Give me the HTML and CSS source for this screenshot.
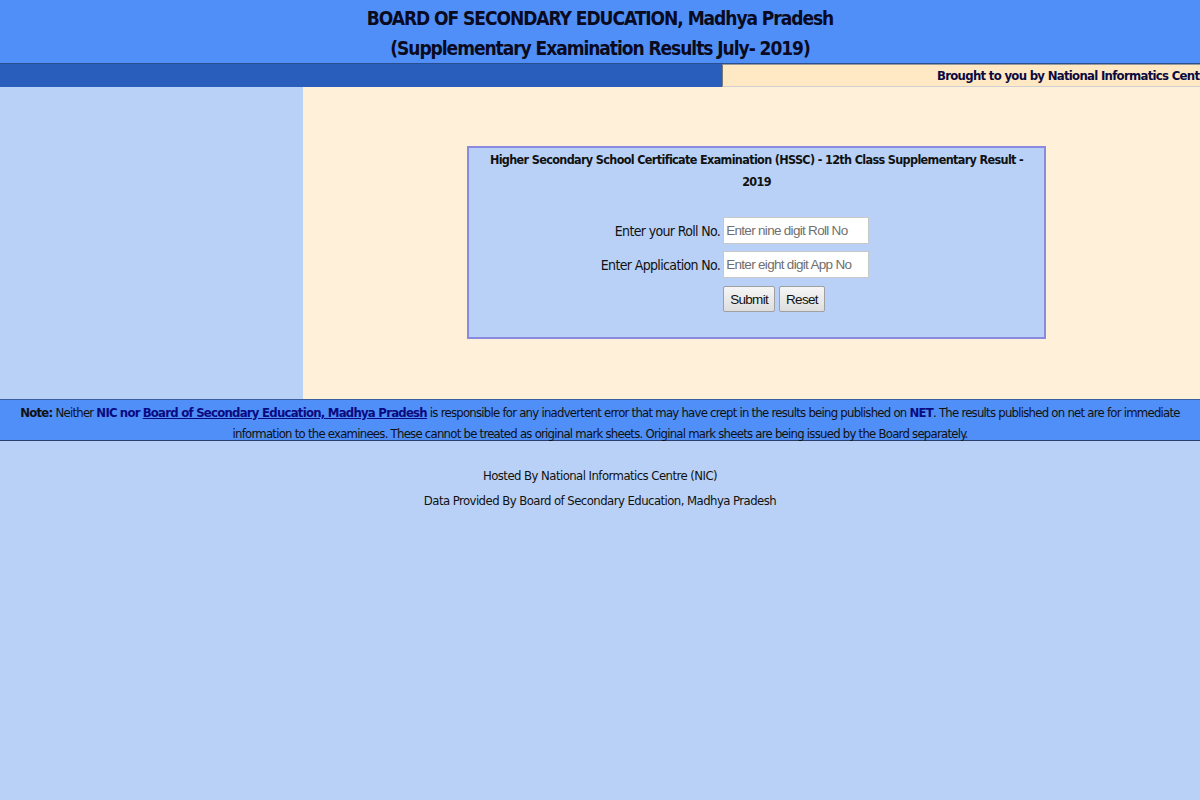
FILE: index.html
```html
<!DOCTYPE html>
<html>
<head>
<meta charset="utf-8">
<title>MP Board Supplementary Result 2019</title>
<link rel="stylesheet" href="styles.css">
</head>
<body>
<header class="top">
  <h1 class="title">BOARD OF SECONDARY EDUCATION, Madhya Pradesh<br>(Supplementary Examination Results July- 2019)</h1>
</header>
<div class="strip">
  <div class="strip-left"></div>
  <div class="strip-right"><span class="brought">Brought to you by National Informatics Centre</span></div>
</div>
<div class="main">
  <aside class="side"></aside>
  <section class="content">
    <form class="box" onsubmit="return false;">
      <h2 class="box-title">Higher Secondary School Certificate Examination (HSSC) - 12th Class Supplementary Result - 2019</h2>
      <div class="fields">
        <label class="lbl" for="roll">Enter your Roll No.</label>
        <input class="inp" id="roll" type="text" placeholder="Enter nine digit Roll No">
        <label class="lbl" for="app">Enter Application No.</label>
        <input class="inp" id="app" type="text" placeholder="Enter eight digit App No">
        <span></span>
        <div class="btns"><button class="btn" type="submit">Submit</button><button class="btn" type="reset">Reset</button></div>
      </div>
    </form>
  </section>
</div>
<div class="note">
  <p><b>Note:</b> Neither <b class="nic">NIC</b> <b class="nic">nor</b> <a href="#" class="link">Board of Secondary Education, Madhya Pradesh</a> is responsible for any inadvertent error that may have crept in the results being published on <b class="nic">NET</b>. The results published on net are for immediate information to the examinees. These cannot be treated as original mark sheets. Original mark sheets are being issued by the Board separately.</p>
</div>
<footer class="foot">
  <p>Hosted By National Informatics Centre (NIC)</p>
  <p>Data Provided By Board of Secondary Education, Madhya Pradesh</p>
</footer>
</body>
</html>
```
FILE: styles.css
```css
html, body {
  margin: 0;
  padding: 0;
}
body {
  background: #b9d1f6;
  font-family: "DejaVu Sans Condensed", "DejaVu Sans", sans-serif;
  font-stretch: condensed;
  color: #111;
  height: 800px;
  overflow: hidden;
}
.top {
  background: #4f8ff7;
  height: 63px;
  box-sizing: border-box;
  padding-top: 3px;
  display: flex;
  justify-content: center;
}
.title {
  margin: 0;
  font-size: 19px;
  line-height: 30px;
  font-weight: bold;
  text-align: center;
  color: #0a0a20;
  letter-spacing: -1.05px;
}
.strip {
  display: flex;
  height: 23px;
  border-top: 1px solid #2a4f8f;
}
.strip-left {
  width: 722px;
  background: #2a5ebd;
}
.strip-right {
  flex: 1;
  background: #ffe8c4;
  border-left: 1px solid #7a7a7a;
  border-top: 1px solid #9a9a9a;
  border-bottom: 1px solid #d0d0d0;
  overflow: hidden;
  white-space: nowrap;
  padding-left: 214px;
  box-sizing: border-box;
  display: flex;
  align-items: center;
}
.brought {
  font-size: 13px;
  font-weight: bold;
  color: #0a0a40;
  letter-spacing: -0.7px;
}
.main {
  display: flex;
  height: 312px;
}
.side {
  width: 303px;
  background: #b9d1f6;
}
.content {
  flex: 1;
  background: #fff0d9;
  padding-top: 59px;
  padding-left: 164px;
}
.box {
  width: 575px;
  height: 189px;
  background: #b9d1f6;
  border: 2px solid #8a8ae0;
  box-sizing: content-box;
}
.box-title {
  margin: 0 6px;
  font-size: 12.5px;
  line-height: 22px;
  font-weight: bold;
  text-align: center;
  letter-spacing: -0.65px;
  padding-top: 1px;
}
.fields {
  margin-top: 24px;
  display: grid;
  grid-template-columns: auto auto;
  column-gap: 3px;
  row-gap: 7px;
  justify-content: center;
  align-items: center;
  padding-right: 43px;
}
.lbl {
  text-align: right;
  font-size: 14px;
  letter-spacing: -0.65px;
}
.inp {
  width: 146px;
  height: 27px;
  box-sizing: border-box;
  border: 1px solid #c8c8c8;
  background: #fff;
  padding: 0 2px;
  font-family: "Liberation Sans", Arial, sans-serif;
  font-size: 13.5px;
  letter-spacing: -0.7px;
  color: #333;
}
.inp::placeholder {
  color: #6f6f6f;
}
.btns {
  display: flex;
  gap: 4px;
  padding-top: 1px;
}
.btn {
  height: 26px;
  padding: 0 6px;
  font-family: "Liberation Sans", Arial, sans-serif;
  font-size: 13.5px;
  letter-spacing: -0.7px;
  color: #111;
  background: linear-gradient(#f6f6f6, #dedede);
  border: 1px solid #a0a0a0;
  border-radius: 2px;
}
.note {
  background: #4f8ff7;
  border-top: 1px solid #3a5fa0;
  border-bottom: 1px solid #2a3f70;
  height: 42px;
  box-sizing: border-box;
  padding: 2px 10px 0;
}
.note p {
  margin: 0;
  font-size: 13px;
  line-height: 21px;
  text-align: center;
  color: #111;
  letter-spacing: -0.75px;
}
.nic {
  color: #0a0a80;
}
.link {
  color: #0a0a80;
  font-weight: bold;
  text-decoration: underline;
}
.foot {
  padding-top: 22px;
  text-align: center;
}
.foot p {
  margin: 0;
  font-size: 13px;
  line-height: 25px;
  color: #111;
  letter-spacing: -0.55px;
}
```
